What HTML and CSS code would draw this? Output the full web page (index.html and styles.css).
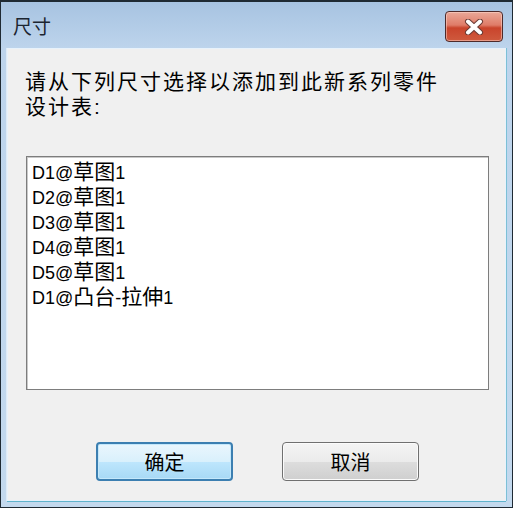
FILE: index.html
```html
<!DOCTYPE html>
<html lang="zh-CN">
<head>
    <meta charset="UTF-8">
    <meta name="viewport" content="width=device-width, initial-scale=1.0">
    <link rel="stylesheet" href="styles.css">
    <title>尺寸</title>
</head>
<body>
    <div class="window">
        <div class="title-bar">
            <span class="title">尺寸</span>
            <button class="close-btn" title="关闭">
                <svg width="22" height="16" viewBox="0 0 22 16">
                    <path d="M5 2.5 L17 13.5 M17 2.5 L5 13.5" stroke="#6a3a34" stroke-width="6" stroke-linecap="round"/>
                    <path d="M5 2.5 L17 13.5 M17 2.5 L5 13.5" stroke="#ffffff" stroke-width="4" stroke-linecap="round"/>
                </svg>
            </button>
        </div>
        <div class="client">
            <p class="prompt">请从下列尺寸选择以添加到此新系列零件<br>设计表:</p>
            <ul class="list-box">
                <li>D1@<span class="cjk">草图</span>1</li>
                <li>D2@<span class="cjk">草图</span>1</li>
                <li>D3@<span class="cjk">草图</span>1</li>
                <li>D4@<span class="cjk">草图</span>1</li>
                <li>D5@<span class="cjk">草图</span>1</li>
                <li>D1@<span class="cjk">凸台</span>-<span class="cjk">拉伸</span>1</li>
            </ul>
            <div class="buttons">
                <button class="btn btn-default">确定</button>
                <button class="btn">取消</button>
            </div>
        </div>
    </div>
</body>
</html>
```

FILE: styles.css
```css
body {
    margin: 0;
    padding: 0;
    background-color: #f0f0f0;
    font-family: "Liberation Sans", "Noto Sans CJK SC", sans-serif;
}
.window {
    width: 513px;
    height: 508px;
    box-sizing: border-box;
    border: 1px solid #1f2a33;
    border-top-width: 2px;
    background: linear-gradient(to bottom, #a7c3e1 0px, #bdd4ec 46px, #c3d9ee 100%);
    display: flex;
    flex-direction: column;
    overflow: hidden;
}
.title-bar {
    height: 46px;
    display: flex;
    align-items: center;
    justify-content: space-between;
    padding: 0 9px 0 12px;
    flex: none;
}
.title {
    font-family: "Noto Sans CJK SC", sans-serif;
    font-size: 19px;
    color: #1c2530;
}
.close-btn {
    width: 58px;
    height: 31px;
    margin-top: 3px;
    border: 1px solid #4e2a2a;
    border-radius: 4px;
    background: linear-gradient(to bottom, #eaa898 0%, #df7c68 45%, #c9442c 55%, #cf5a3e 100%);
    box-shadow: inset 0 0 0 1px rgba(255, 220, 210, 0.5);
    display: flex;
    align-items: center;
    justify-content: center;
    padding: 0;
}
.client {
    flex: 1;
    margin: 0 6px 6px 6px;
    background-color: #f0f0f0;
    border: 1px solid #e8f2fb;
    box-shadow: 0 1px 0 #5fb3cc, 1px 0 0 #7cc0d6, -1px 0 0 #dfeaf5;
    padding: 20px 0 0 17px;
}
.prompt {
    margin: 0;
    font-size: 21px;
    line-height: 25px;
    letter-spacing: 2px;
    color: #000000;
}
.list-box {
    list-style: none;
    margin: 37px 0 0 1px;
    padding: 4px 0 0 5px;
    width: 463px;
    height: 234px;
    box-sizing: border-box;
    background-color: #ffffff;
    border: 1px solid #7d7d7d;
    box-shadow: inset 1px 1px 0 #c9c9c9;
}
.list-box li {
    height: 25px;
    font-size: 18px;
    line-height: 25px;
    color: #000000;
}
.cjk {
    font-size: 21px;
    line-height: 1;
}
.buttons {
    display: flex;
    gap: 49px;
    margin-top: 52px;
    padding-left: 71px;
}
.btn {
    width: 137px;
    height: 39px;
    box-sizing: border-box;
    border: 1px solid #707070;
    border-radius: 4px;
    background: linear-gradient(to bottom, #f4f4f4 0%, #ebebeb 50%, #dddddd 51%, #cfcfcf 100%);
    box-shadow: inset 0 0 0 1px #fbfbfb;
    font-family: "Noto Sans CJK SC", sans-serif;
    font-size: 20px;
    color: #000000;
    padding: 0;
}
.btn-default {
    border: 2px solid #3c7fb1;
    background: linear-gradient(to bottom, #eaf6fd 0%, #d9f0fc 50%, #bee6fd 51%, #a7d9f5 100%);
    box-shadow: inset 0 0 0 1px #c4e8fb;
}
```
